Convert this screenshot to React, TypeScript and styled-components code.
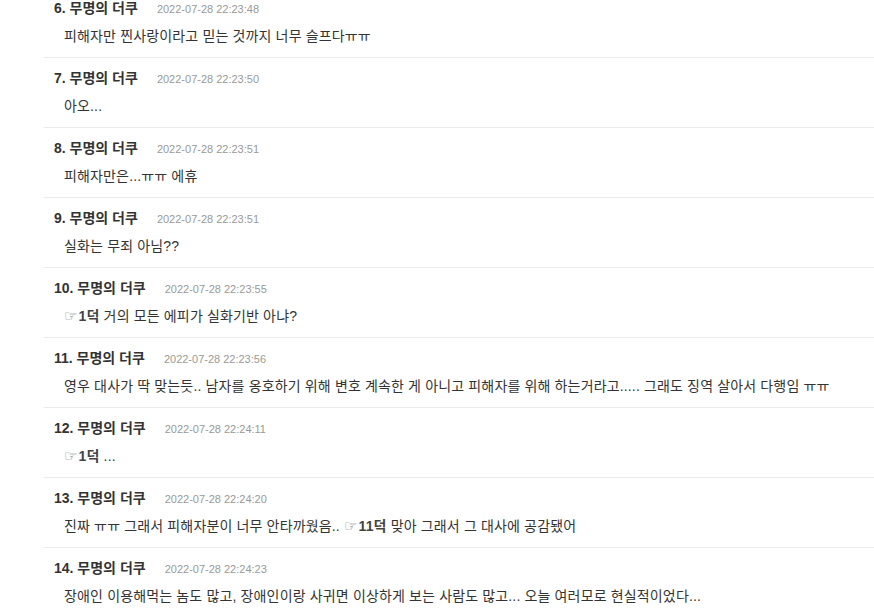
import React from "react";
import styled, { createGlobalStyle } from "styled-components";

const Global = createGlobalStyle`
  html, body { margin: 0; padding: 0; background: #fff; }
  body {
    font-family: "Liberation Sans", Arial, "Noto Sans CJK KR", sans-serif;
    color: #333;
    overflow: hidden;
  }
`;

const List = styled.ul`
  list-style: none;
  margin: -12px 0 0 44px;
  padding: 0;
`;

const Row = styled.li`
  box-sizing: border-box;
  height: 70px;
  padding: 12px 0 0 10px;
  border-bottom: 1px solid #ebebeb;
`;

const Header = styled.div`
  display: flex;
  align-items: baseline;
  gap: 19px;
  height: 17px;
  line-height: 17px;
`;

const Name = styled.span`
  font-size: 14px;
  font-weight: bold;
  color: #333;
`;

const Time = styled.span`
  font-size: 11px;
  color: #999;
`;

const Content = styled.div`
  margin-top: 10px;
  padding-left: 10px;
  font-size: 14px;
  line-height: 19px;
  letter-spacing: 0.15px;
  color: #333;
  white-space: nowrap;
`;

const Ref = styled.span`
  font-weight: bold;
  color: #444;
`;

const Hand = styled.span`
  font-family: "DejaVu Sans", sans-serif;
  font-weight: normal;
  font-size: 15px;
  color: #777;
  margin-right: 1px;
`;

type Part = string | { ref: string };

const comments: { n: number; time: string; body: Part[] }[] = [
  { n: 6, time: "2022-07-28 22:23:48", body: ["피해자만 찐사랑이라고 믿는 것까지 너무 슬프다ㅠㅠ"] },
  { n: 7, time: "2022-07-28 22:23:50", body: ["아오..."] },
  { n: 8, time: "2022-07-28 22:23:51", body: ["피해자만은...ㅠㅠ 에휴"] },
  { n: 9, time: "2022-07-28 22:23:51", body: ["실화는 무죄 아님??"] },
  { n: 10, time: "2022-07-28 22:23:55", body: [{ ref: "1덕" }, " 거의 모든 에피가 실화기반 아냐?"] },
  {
    n: 11,
    time: "2022-07-28 22:23:56",
    body: ["영우 대사가 딱 맞는듯.. 남자를 옹호하기 위해 변호 계속한 게 아니고 피해자를 위해 하는거라고..... 그래도 징역 살아서 다행임 ㅠㅠ"],
  },
  { n: 12, time: "2022-07-28 22:24:11", body: [{ ref: "1덕" }, " ..."] },
  {
    n: 13,
    time: "2022-07-28 22:24:20",
    body: ["진짜 ㅠㅠ 그래서 피해자분이 너무 안타까웠음.. ", { ref: "11덕" }, " 맞아 그래서 그 대사에 공감됐어"],
  },
  {
    n: 14,
    time: "2022-07-28 22:24:23",
    body: ["장애인 이용해먹는 놈도 많고, 장애인이랑 사귀면 이상하게 보는 사람도 많고... 오늘 여러모로 현실적이었다..."],
  },
];

export default function App() {
  return (
    <>
      <Global />
      <List>
        {comments.map((c) => (
          <Row key={c.n}>
            <Header>
              <Name>{c.n}. 무명의 더쿠</Name>
              <Time>{c.time}</Time>
            </Header>
            <Content>
              {c.body.map((p, i) =>
                typeof p === "string" ? (
                  <React.Fragment key={i}>{p}</React.Fragment>
                ) : (
                  <Ref key={i}>
                    <Hand>{"\u261E\uFE0E"}</Hand>
                    {p.ref}
                  </Ref>
                )
              )}
            </Content>
          </Row>
        ))}
      </List>
    </>
  );
}
